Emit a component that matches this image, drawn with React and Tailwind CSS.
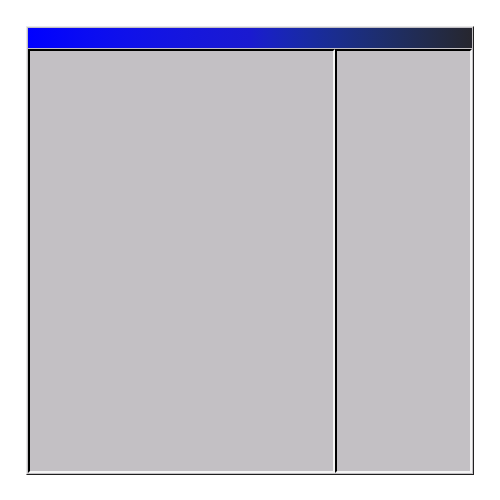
export default function App() {
  return (
    <div className="w-[500px] h-[500px] bg-white p-[26px]">
      <div className="flex h-[449px] w-[448px] flex-col border border-t-[#e8e8e8] border-l-[#e8e8e8] border-b-[#202020] border-r-[#202020] bg-[#c3c0c4] p-px">
        <div className="h-[20px] shrink-0 bg-gradient-to-r from-[#0000ff] via-[#1a1ad0] to-[#26262e]" />
        <div className="flex min-h-0 flex-1 pt-px">
          <div className="h-full w-[307px] border-2 border-t-[#000] border-l-[#000] border-b-[#f4f4f4] border-r-[#f4f4f4] bg-[#c3c0c4]" />
          <div className="h-full flex-1 border-2 border-t-[#000] border-l-[#000] border-b-[#f4f4f4] border-r-[#f4f4f4] bg-[#c3c0c4]" />
        </div>
      </div>
    </div>
  );
}
